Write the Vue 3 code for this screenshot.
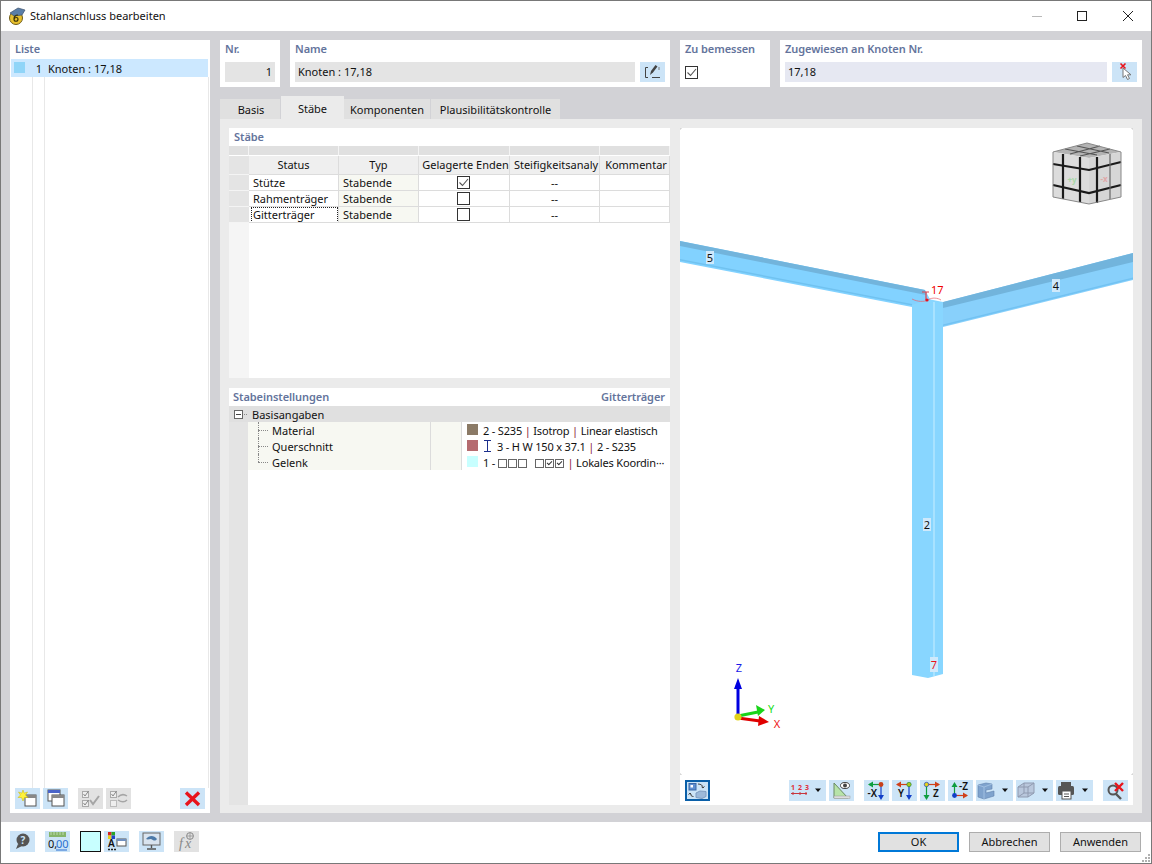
<script setup>
const tabs = [
  { label: 'Basis', width: 61 },
  { label: 'Stäbe', width: 63, active: true },
  { label: 'Komponenten', width: 87 },
  { label: 'Plausibilitätskontrolle', width: 130 }
]

const columns = ['Status', 'Typ', 'Gelagerte Enden', 'Steifigkeitsanaly', 'Kommentar']

const rows = [
  { status: 'Stütze', checked: true },
  { status: 'Rahmenträger', checked: false },
  { status: 'Gitterträger', checked: false, focus: true }
]
</script>

<template>
  <div class="window">
    <header class="titlebar">
      <svg class="app-icon" width="18" height="18" viewBox="0 0 18 18">
        <circle cx="8" cy="11" r="6.5" fill="#e8c02c" stroke="#6d5a18" />
        <path d="M2 6 L10 1 L17 3 L14 8 L6 9 Z" fill="#5b7fa8" stroke="#3c506c" stroke-width=".7" />
        <path d="M10 8 C7 8 6 10 6 12 C6 15 10 15 10 12 C10 10 7 10 6 12" fill="none" stroke="#3a3208" stroke-width="1.2" />
      </svg>
      <span class="title">Stahlanschluss bearbeiten</span>
      <div class="win-controls">
        <svg width="12" height="12" viewBox="0 0 12 12" class="win-min"><path d="M1 6.5 H11" stroke="#b9b9b9" /></svg>
        <svg width="12" height="12" viewBox="0 0 12 12" class="win-max"><rect x="1.5" y="1.5" width="9" height="9" fill="none" stroke="#222" /></svg>
        <svg width="12" height="12" viewBox="0 0 12 12" class="win-close"><path d="M1 1 L11 11 M11 1 L1 11" stroke="#222" /></svg>
      </div>
    </header>

    <div class="body">
      <aside class="list-panel">
        <div class="panel-label">Liste</div>
        <div class="list-area">
          <div class="list-row">
            <span class="list-swatch"></span>
            <span class="list-nr">1</span>
            <span class="list-text">Knoten : 17,18</span>
          </div>
          <div class="list-guides"><i></i><i></i><i></i></div>
        </div>
        <div class="list-tools">
          <button class="tb">
            <svg width="25" height="21" viewBox="0 0 25 21">
              <rect x="10" y="7" width="11" height="11" fill="#fff" stroke="#555" /><rect x="10" y="7" width="11" height="3" fill="#888" />
              <path d="M8 2 L9.2 5.2 L12.5 4 L10.5 7 L13 9.5 L9.5 9.5 L8 13 L6.5 9.5 L3 9.5 L5.5 7 L3.5 4 L6.8 5.2 Z" fill="#fff23a" stroke="#c9b400" stroke-width=".5" />
            </svg>
          </button>
          <button class="tb">
            <svg width="25" height="21" viewBox="0 0 25 21">
              <rect x="5" y="2" width="12" height="11" fill="#fff" stroke="#555" /><rect x="5" y="2" width="12" height="3" fill="#4a64c8" />
              <rect x="9" y="7" width="12" height="11" fill="#fff" stroke="#555" /><rect x="9" y="7" width="12" height="3" fill="#888" />
            </svg>
          </button>
          <button class="tb off gap-l">
            <svg width="25" height="21" viewBox="0 0 25 21">
              <rect x="4.5" y="3.5" width="6" height="6" fill="#eee" stroke="#aaa" /><rect x="4.5" y="12.5" width="6" height="6" fill="#eee" stroke="#aaa" />
              <path d="M5.5 6 L7 8 L10.5 3 M5.5 15 L7 17 L10.5 12" fill="none" stroke="#888" /><path d="M12 12 L15 16 L21 8" fill="none" stroke="#a5a5a5" stroke-width="2" />
            </svg>
          </button>
          <button class="tb off">
            <svg width="25" height="21" viewBox="0 0 25 21">
              <rect x="4.5" y="3.5" width="6" height="6" fill="#eee" stroke="#aaa" /><rect x="4.5" y="12.5" width="6" height="6" fill="#eee" stroke="#bbb" />
              <path d="M5.5 6 L7 8 L10.5 3" fill="none" stroke="#888" /><path d="M12 9 C15 6 18 6 21 8 M21 12 C18 15 15 14 12 12" fill="none" stroke="#a5a5a5" stroke-width="1.5" />
            </svg>
          </button>
          <button class="tb push-r">
            <svg width="25" height="21" viewBox="0 0 25 21"><path d="M6 4.5 L19 17 M19 4.5 L6 17" stroke="#e8141c" stroke-width="3.4" /></svg>
          </button>
        </div>
      </aside>

      <main class="main">
        <div class="top-row">
          <section class="box box-nr">
            <div class="panel-label">Nr.</div>
            <div class="field nr-field">1</div>
          </section>
          <section class="box box-name">
            <div class="panel-label">Name</div>
            <div class="field-row">
              <div class="field grow">Knoten : 17,18</div>
              <button class="tb">
                <svg width="25" height="20" viewBox="0 0 25 20">
                  <path d="M8 5.5 H5.5 V15.5 H8 M12 15.5 H20" fill="none" stroke="#444" />
                  <path d="M10 13 L11 9 L15.5 3 L17.5 4.5 L13 10.5 Z" fill="#444" /><path d="M19 5 V8" stroke="#777" />
                </svg>
              </button>
            </div>
          </section>
          <section class="box box-check">
            <div class="panel-label">Zu bemessen</div>
            <span class="check on top-check">
              <svg width="11" height="11" viewBox="0 0 11 11"><path d="M1.5 5.5 L4.5 8.5 L10 2" fill="none" stroke="#555" stroke-width="1.1" /></svg>
            </span>
          </section>
          <section class="box box-nodes">
            <div class="panel-label">Zugewiesen an Knoten Nr.</div>
            <div class="field-row">
              <div class="field grow nodes-field">17,18</div>
              <button class="tb">
                <svg width="25" height="20" viewBox="0 0 25 20">
                  <path d="M11 6 L11 15.5 L13.5 13.5 L15.5 17.5 L17.5 16.5 L15.5 12.8 L19 12.8 Z" fill="#fff" stroke="#777" />
                  <path d="M8.5 1.5 L13.5 6.5 M13.5 1.5 L8.5 6.5" stroke="#e8141c" stroke-width="1.6" />
                </svg>
              </button>
            </div>
          </section>
        </div>

        <nav class="tabs">
          <div
            v-for="tab in tabs"
            :key="tab.label"
            class="tab"
            :class="{ active: tab.active }"
            :style="{ width: tab.width + 'px' }"
          >{{ tab.label }}</div>
        </nav>

        <div class="tab-content">
          <div class="left-col">
            <section class="sheet sheet-members">
              <div class="panel-label sheet-label">Stäbe</div>
              <div class="grid">
                <div class="g-h0 g-corner"></div>
                <div v-for="col in columns" :key="'top-' + col" class="g-h0"></div>
                <div class="g-rowhead g-headrow"></div>
                <div v-for="col in columns" :key="col" class="g-head">{{ col }}</div>
                <template v-for="row in rows" :key="row.status">
                  <div class="g-rowhead"></div>
                  <div class="g-cell g-left"><span :class="{ focus: row.focus }">{{ row.status }}</span></div>
                  <div class="g-cell g-left g-tint">Stabende</div>
                  <div class="g-cell g-center">
                    <span class="check cell-check" :class="{ on: row.checked }">
                      <svg v-if="row.checked" width="11" height="11" viewBox="0 0 11 11"><path d="M1.5 5.5 L4.5 8.5 L10 2" fill="none" stroke="#555" stroke-width="1.1" /></svg>
                    </span>
                  </div>
                  <div class="g-cell g-center">--</div>
                  <div class="g-cell"></div>
                </template>
              </div>
              <div class="grid-rest"></div>
            </section>

            <section class="sheet sheet-settings">
              <div class="settings-head">
                <span class="panel-label flat">Stabeinstellungen</span>
                <span class="panel-label flat">Gitterträger</span>
              </div>
              <div class="tree-group">
                <span class="minus"></span>
                <span class="dots-h short"></span>
                <span>Basisangaben</span>
              </div>
              <div class="tree-wrap">
                <div class="tree-gutter"></div>
                <div class="tree-rows">
                  <div class="tree-row">
                    <div class="t-name"><span class="dots-v"></span><span class="dots-h"></span>Material</div>
                    <div class="t-mid"></div>
                    <div class="t-val"><span class="swatch" style="background: #8b7a66"></span><span>2 - S235 <b>|</b> Isotrop <b>|</b> Linear elastisch</span></div>
                  </div>
                  <div class="tree-row">
                    <div class="t-name"><span class="dots-v"></span><span class="dots-h"></span>Querschnitt</div>
                    <div class="t-mid"></div>
                    <div class="t-val">
                      <span class="swatch" style="background: #b56b70"></span>
                      <svg class="ibeam" width="9" height="12" viewBox="0 0 9 12"><path d="M1 .5 H8 M4.5 .5 V11.5 M1 11.5 H8" stroke="#1c2f8c" fill="none" /></svg>
                      <span>3 - H W 150 x 37.1 <b>|</b> 2 - S235</span>
                    </div>
                  </div>
                  <div class="tree-row">
                    <div class="t-name"><span class="dots-v end"></span><span class="dots-h"></span>Gelenk</div>
                    <div class="t-mid"></div>
                    <div class="t-val">
                      <span class="swatch" style="background: #c8ffff"></span>
                      <span>1 - <span class="dof-group"><i class="dof"></i><i class="dof"></i><i class="dof"></i></span><span class="dof-group second"><i class="dof"></i><i class="dof tick"></i><i class="dof tick"></i></span> <b>|</b> Lokales Koordin···</span>
                    </div>
                  </div>
                </div>
              </div>
            </section>
          </div>

          <section class="viewer">
            <svg class="scene" width="453" height="647" viewBox="680 128 453 647">
              <!-- corner marks -->
              <path d="M680 130 V128 H682 M1131 128 H1133 V130 M680 773 V775 H682 M1131 775 H1133 V773" fill="none" stroke="#c8c8c8" />
              <!-- beam 5 -->
              <polygon points="680,241 925,290 932,303 912,307 680,262" fill="#82d2ff" />
              <polygon points="680,241 925,290 926,295 680,246" fill="#72b4dc" />
              <polygon points="680,259 912,304 912,305.5 680,260.5" fill="#70c2f0" />
              <!-- beam 4 -->
              <polygon points="1133,253 1133,280 943,327 936,304" fill="#88d0fb" />
              <polygon points="1133,253 1133,262 943,308 943,302" fill="#72b4dc" />
              <polygon points="1133,277.5 1133,279 943,326 943,324.5" fill="#72c2f2" />
              <!-- column 2 -->
              <polygon points="912,305 928,299 943,302 943,674 928,678 912,675" fill="#88d6ff" />
              <polygon points="933,302 935,302 935,676 933,676" fill="#a8e2ff" />
              <!-- node 17 -->
              <path d="M922 292 H929 M926 292 V300" stroke="#e0404a" stroke-width="1.2" fill="none" />
              <path d="M912 299 C918 302 924 302 928 300 C932 297 938 298 941 300" stroke="#e8606a" stroke-width=".7" fill="none" />
              <circle cx="927" cy="300" r="1.6" fill="#e8101c" />
              <text x="931" y="294" class="s-label" fill="#f00000">17</text>
              <!-- member numbers -->
              <rect x="706" y="251" width="8" height="13" fill="#cfe9fb" />
              <text x="710" y="262" class="s-label mid" fill="#111">5</text>
              <rect x="1052" y="279" width="8" height="13" fill="#cfe9fb" />
              <text x="1056" y="290" class="s-label mid" fill="#111">4</text>
              <rect x="923" y="518" width="8" height="13" fill="#cfe9fb" />
              <text x="927" y="529" class="s-label mid" fill="#111">2</text>
              <rect x="930" y="657" width="8" height="15" fill="#cfe9fb" />
              <text x="934" y="669" class="s-label mid" fill="#e8141c">7</text>

              <!-- view cube -->
              <polygon points="1087,143 1121,152 1089,158 1053,152" fill="#b4b4b4" />
              <polygon points="1053,152 1089,158 1089,204 1053,197" fill="#dcdcdc" />
              <polygon points="1089,158 1121,152 1121,197 1089,204" fill="#d6d6d6" />
              <g stroke="#1a1a1a" stroke-width="2.2" fill="none">
                <path d="M1053 164 L1089 170 L1121 162 M1053 185 L1089 193 L1121 185" />
                <path d="M1063 154 V199 M1080 157 V202 M1097 157 V203" />
              </g>
              <path d="M1065 149 L1097 155 M1077 146 L1109 153 M1100 146 L1070 154 M1110 149 L1080 156" stroke="#555" stroke-width="1.1" fill="none" />
              <path d="M1110 154 V199" stroke="#666" stroke-width="1.2" />
              <polygon points="1053,152 1087,143 1121,152 1121,197 1089,204 1053,197" fill="none" stroke="#888" />
              <text x="1072" y="183" class="cube-y">+y</text>
              <text x="1104" y="182" class="cube-x">-x</text>

              <!-- axes -->
              <path d="M738 717 V686" stroke="#0000e0" stroke-width="3" />
              <polygon points="738,678 742,689 734,689" fill="#0000e0" />
              <path d="M738 716 L758 712" stroke="#19d419" stroke-width="3" />
              <polygon points="765,710 756,705 758,716" fill="#19d419" />
              <path d="M738 718 L760 721" stroke="#e00000" stroke-width="3" />
              <polygon points="769,722 759,716 758,726" fill="#e00000" />
              <circle cx="738" cy="717" r="3.6" fill="#e2d21a" />
              <text x="739" y="672" class="axis mid" fill="#1a1ae8">Z</text>
              <text x="771" y="713" class="axis mid" fill="#22dd22">Y</text>
              <text x="777" y="728" class="axis mid" fill="#ee1111">X</text>
            </svg>

            <div class="view-tools">
              <button class="tb outlined">
                <svg width="25" height="21" viewBox="0 0 25 21">
                  <rect x="4" y="3.5" width="7" height="6.5" fill="#5f8fd0" stroke="#3a68a8" /><rect x="5.5" y="5" width="2.5" height="2.5" fill="#fff" />
                  <path d="M13 4 C16 4 18 5.5 18 8 M18 8 L16.5 6.8 M18 8 L19.5 6.5 M5 13 C5 15 6.5 16.5 8.5 16.5 M5 13 L3.5 14.5 M5 13 L6.5 14.5" fill="none" stroke="#444" />
                  <path d="M11 13 L15 11 L21 11.5 V16.5 L17 18.5 L11 17.5 Z" fill="#9cb9d9" stroke="#7f9cc0" />
                </svg>
              </button>
              <button class="tb wide first">
                <svg width="37" height="21" viewBox="0 0 37 21">
                  <text x="2" y="10" class="tiny">1</text><text x="9" y="10" class="tiny">2</text><text x="16" y="10" class="tiny">3</text>
                  <path d="M2 13.5 H18 M4 12 V15 M11 12 V15 M17 12 V15" stroke="#c8353c" fill="none" />
                  <polygon points="26,8.5 32,8.5 29,12" fill="#111" />
                </svg>
              </button>
              <button class="tb">
                <svg width="25" height="21" viewBox="0 0 25 21">
                  <polygon points="5,3 5,18 19,18" fill="#b7e3a8" stroke="#6a8a62" />
                  <rect x="5" y="16" width="16" height="2.5" fill="#ddd" stroke="#999" stroke-width=".5" />
                  <ellipse cx="16" cy="5.5" rx="4.5" ry="3" fill="#fff" stroke="#444" /><circle cx="16" cy="5.5" r="2" fill="#444" />
                </svg>
              </button>
              <button class="tb gap-l">
                <svg width="25" height="21" viewBox="0 0 25 21">
                  <path d="M16 4.5 H5" stroke="#0f9d3f" stroke-width="1.2" /><polygon points="4,4.5 9,1.5 9,7.5" fill="#0f9d3f" />
                  <path d="M17 4.5 V17" stroke="#1440c8" stroke-width="1.2" /><polygon points="17,20 14,15 20,15" fill="#1440c8" />
                  <circle cx="17" cy="4.5" r="2.4" fill="#c8401a" />
                  <text x="3.5" y="17" class="ax-t">-X</text>
                </svg>
              </button>
              <button class="tb">
                <svg width="25" height="21" viewBox="0 0 25 21">
                  <path d="M16 4.5 H5" stroke="#d0401a" stroke-width="1.2" /><polygon points="4,4.5 9,1.5 9,7.5" fill="#d0401a" />
                  <path d="M17 4.5 V17" stroke="#1440c8" stroke-width="1.2" /><polygon points="17,20 14,15 20,15" fill="#1440c8" />
                  <circle cx="17" cy="4.5" r="2.2" fill="#a8c81a" stroke="#0f7d3f" stroke-width=".6" />
                  <text x="6" y="17" class="ax-t">Y</text>
                </svg>
              </button>
              <button class="tb">
                <svg width="25" height="21" viewBox="0 0 25 21">
                  <path d="M7 4.5 H19" stroke="#d0401a" stroke-width="1.2" /><polygon points="20,4.5 15,1.5 15,7.5" fill="#d0401a" />
                  <path d="M6.5 4.5 V17" stroke="#0f9d3f" stroke-width="1.2" /><polygon points="6.5,20 3.5,15 9.5,15" fill="#0f9d3f" />
                  <circle cx="6.5" cy="4.5" r="2.2" fill="#e8d21a" stroke="#1440c8" stroke-width=".7" />
                  <text x="13" y="17" class="ax-t">Z</text>
                </svg>
              </button>
              <button class="tb">
                <svg width="25" height="21" viewBox="0 0 25 21">
                  <path d="M6.5 15.5 V5" stroke="#0f9d3f" stroke-width="1.2" /><polygon points="6.5,2 3.5,7 9.5,7" fill="#0f9d3f" />
                  <path d="M7 15.5 H19" stroke="#d0401a" stroke-width="1.2" /><polygon points="20,15.5 15,12.5 15,18.5" fill="#d0401a" />
                  <circle cx="6.5" cy="15.5" r="2.4" fill="#1440c8" />
                  <text x="11" y="10" class="ax-t">-Z</text>
                </svg>
              </button>
              <button class="tb wide">
                <svg width="37" height="21" viewBox="0 0 37 21">
                  <polygon points="2,5 10,3 16,4 16,9 10,10 10,13 18,11 18,16 8,19 2,17" fill="#7fa3cd" stroke="#5f82ad" stroke-width=".6" />
                  <path d="M2 5 L8 7 L16 4 M8 7 V19" fill="none" stroke="#a9c6e6" stroke-width=".8" />
                  <polygon points="26,8.5 32,8.5 29,12" fill="#111" />
                </svg>
              </button>
              <button class="tb wide">
                <svg width="37" height="21" viewBox="0 0 37 21">
                  <path d="M2 7 L8 3 H18 V13 L12 17 H2 Z" fill="#b9c7dc" stroke="#8f9ab0" />
                  <path d="M2 7 H12 V17 M12 7 L18 3 M2 17 L8 13 H18 M8 3 V13" fill="none" stroke="#8f9ab0" />
                  <polygon points="26,8.5 32,8.5 29,12" fill="#111" />
                </svg>
              </button>
              <button class="tb wide">
                <svg width="37" height="21" viewBox="0 0 37 21">
                  <rect x="5" y="2" width="10" height="4" fill="#555" /><rect x="2" y="6" width="16" height="9" rx="1.5" fill="#555" />
                  <rect x="6" y="11" width="9" height="8" fill="#fff" stroke="#555" /><path d="M8 14 H13 M8 16.5 H13" stroke="#555" />
                  <polygon points="26,8.5 32,8.5 29,12" fill="#111" />
                </svg>
              </button>
              <button class="tb gap-m">
                <svg width="25" height="21" viewBox="0 0 25 21">
                  <circle cx="10" cy="10" r="4.5" fill="none" stroke="#555" stroke-width="2" /><path d="M13 14 L18 19" stroke="#555" stroke-width="2.4" />
                  <path d="M12 3 L20 11 M20 3 L12 11" stroke="#e8141c" stroke-width="2.4" />
                </svg>
              </button>
            </div>
          </section>
        </div>
      </main>
    </div>

    <footer class="footer">
      <div class="foot-tools">
        <button class="tb">
          <svg width="25" height="21" viewBox="0 0 25 21">
            <circle cx="13" cy="9" r="6.5" fill="#555" /><path d="M8 13 L6 18 L12 15 Z" fill="#555" />
            <text x="13" y="12.5" class="q">?</text>
          </svg>
        </button>
        <button class="tb f-gap">
          <svg width="25" height="21" viewBox="0 0 25 21">
            <rect x="4" y="1" width="17" height="5" fill="#86b56a" /><path d="M6 1 V4 M9 1 V4 M12 1 V4 M15 1 V4 M18 1 V4" stroke="#d6ead0" stroke-width=".7" />
            <text x="3" y="17" class="num">0,</text><text x="11" y="17" class="num blue">00</text>
            <path d="M11 19 H22" stroke="#2a6fd0" />
          </svg>
        </button>
        <span class="color-box"></span>
        <button class="tb tight">
          <svg width="25" height="21" viewBox="0 0 25 21">
            <rect x="4" y="1" width="3.5" height="3.5" fill="#d62222" /><rect x="7.5" y="1" width="3.5" height="3.5" fill="#28a428" />
            <rect x="4" y="4.5" width="3.5" height="3.5" fill="#e8d21a" /><rect x="7.5" y="4.5" width="3.5" height="3.5" fill="#2244c8" />
            <text x="4" y="16" class="ax-t">A</text><path d="M4 18.5 H12" stroke="#222" stroke-dasharray="2 1" stroke-width="1.5" />
            <rect x="13" y="8" width="9" height="7" fill="#fff" stroke="#555" /><rect x="13" y="8" width="9" height="2" fill="#7090c0" />
          </svg>
        </button>
        <button class="tb f-gap">
          <svg width="25" height="21" viewBox="0 0 25 21">
            <rect x="4" y="2" width="17" height="12" fill="#d9e4ef" stroke="#666" />
            <path d="M7 8 C10 4 15 4 18 8 C16 11 14 9 12 8 C10 8 9 9 7 8 Z" fill="#4d7aa8" />
            <path d="M12.5 14 V17 M8 18 H17" stroke="#555" stroke-width="1.4" />
          </svg>
        </button>
        <button class="tb off f-gap">
          <svg width="25" height="21" viewBox="0 0 25 21">
            <text x="5" y="17" class="fx">f</text><text x="11" y="17" class="fx">x</text>
            <circle cx="16" cy="5" r="3.4" fill="none" stroke="#888" /><path d="M16 2 V8 M13 5 H19" stroke="#888" stroke-width=".7" />
          </svg>
        </button>
      </div>
      <div class="foot-actions">
        <button class="action primary">OK</button>
        <button class="action">Abbrechen</button>
        <button class="action">Anwenden</button>
      </div>
      <svg class="grip" width="9" height="9" viewBox="0 0 9 9">
        <path d="M7 1h2v2H7z M4 4h2v2H4z M7 4h2v2H7z M1 7h2v2H1z M4 7h2v2H4z M7 7h2v2H7z" fill="#b0b0b0" />
      </svg>
    </footer>
  </div>
</template>

<style scoped>
.window {
  width: 1152px;
  height: 864px;
  box-sizing: border-box;
  border: 1px solid #787878;
  display: flex;
  flex-direction: column;
  background: #fff;
  color: #111;
  font-family: "Noto Sans", "Liberation Sans", sans-serif;
  font-size: 11px;
  overflow: hidden;
}

.titlebar {
  height: 30px;
  flex: none;
  display: flex;
  align-items: center;
  position: relative;
}

.app-icon {
  margin-left: 7px;
  margin-right: 4px;
}

.title {
  font-size: 11px;
  margin-top: -1px;
}

.win-controls {
  position: absolute;
  right: 17px;
  top: 9px;
  display: flex;
}

.win-min { margin-right: 33px; }
.win-max { margin-right: 34px; }

.body {
  height: 791px;
  flex: none;
  box-sizing: border-box;
  padding: 9px;
  display: flex;
  gap: 10px;
  background: #d2d2d6;
}

.panel-label {
  font-weight: 600;
  color: #64749c;
  font-size: 11px;
  line-height: 18px;
  padding-left: 5px;
  letter-spacing: -0.07px;
}

.panel-label.flat {
  padding: 0;
}

/* left list */
.list-panel {
  width: 200px;
  flex: none;
  background: #fff;
  display: flex;
  flex-direction: column;
  box-sizing: border-box;
}

.list-panel > .panel-label {
  height: 19px;
}

.list-area {
  flex: 1;
  position: relative;
  margin: 0 1px;
  display: flex;
  flex-direction: column;
}

.list-row {
  height: 18px;
  display: flex;
  align-items: center;
  background: #cce8ff;
  width: 197px;
}

.list-swatch {
  width: 11px;
  height: 11px;
  margin: 0 0 2px 3px;
  background: #90d5f8;
}

.list-nr {
  width: 14px;
  margin-left: 3px;
  text-align: right;
  margin-right: 6px;
}

.list-guides {
  flex: 1;
  display: flex;
  width: 198px;
  position: relative;
}

.list-guides i {
  width: 1px;
  background: #e8e8e8;
}

.list-guides i:nth-child(1) { margin-left: 21px; }
.list-guides i:nth-child(2) { margin-left: 11px; }
.list-guides i:nth-child(3) { margin-left: auto; }

.list-tools {
  height: 25px;
  flex: none;
  display: flex;
  gap: 3px;
  padding-left: 5px;
}

.tb {
  width: 25px;
  height: 21px;
  flex: none;
  padding: 0;
  border: 0;
  background: #cce4f7;
  display: block;
}

.tb svg {
  display: block;
}

.tb.off {
  background: #e2e2e2;
}

.gap-l { margin-left: 7px; }
.push-r { margin-left: 46px; }

/* header boxes */
.main {
  flex: 1;
  min-width: 0;
  display: flex;
  flex-direction: column;
}

.top-row {
  height: 47px;
  flex: none;
  display: flex;
  gap: 10px;
}

.box {
  background: #fff;
  box-sizing: border-box;
  padding: 0 5px;
}

.box .panel-label {
  padding-left: 0;
  height: 22px;
}

.box-nr { width: 60px; }
.box-name { width: 380px; }
.box-check { width: 90px; }
.box-nodes { width: 362px; }

.field {
  height: 20px;
  line-height: 20px;
  background: #e4e4e4;
  padding: 0 3px;
  box-sizing: border-box;
  font-size: 11px;
}

.nr-field {
  text-align: right;
}

.field-row {
  display: flex;
  gap: 5px;
}

.field-row .tb {
  height: 20px;
}

.grow { flex: 1; }

.nodes-field {
  background: #e6e8f2;
}

.check {
  display: inline-flex;
  align-items: center;
  justify-content: center;
  width: 13px;
  height: 13px;
  box-sizing: border-box;
  border: 1px solid #333;
  background: #fff;
  vertical-align: middle;
}

.top-check {
  display: flex;
  margin-top: 4px;
}

.cell-check {
  margin-right: 2px;
}

/* tabs */
.tabs {
  height: 22px;
  margin-top: 10px;
  flex: none;
  display: flex;
  align-items: flex-end;
}

.tab {
  height: 20px;
  line-height: 22px;
  text-align: center;
  background: #e0e0e0;
  box-sizing: border-box;
  border-right: 1px solid #d2d2d6;
}

.tab:first-child {
  padding-left: 2px;
}

.tab.active {
  height: 23px;
  line-height: 25px;
  background: #ebebeb;
  border-right: 0;
}

.tab-content {
  flex: 1;
  min-height: 0;
  background: #ebebeb;
  padding: 9px 9px 8px;
  display: flex;
  gap: 10px;
}

.left-col {
  width: 441px;
  flex: none;
  display: flex;
  flex-direction: column;
  gap: 10px;
}

.sheet {
  background: #fff;
  display: flex;
  flex-direction: column;
}

.sheet-members {
  height: 250px;
  flex: none;
}

.sheet-settings {
  flex: 1;
  min-height: 0;
}

.sheet-label {
  height: 18px;
  flex: none;
}

/* members table */
.grid {
  display: grid;
  grid-template-columns: 20px 90px 80px 91px 90px 70px;
  grid-template-rows: 10px 19px 16px 16px 16px;
  flex: none;
}

.g-h0 {
  background: #e0e0e0;
  border-right: 1px solid #f4f4f4;
  border-bottom: 1px solid #fff;
  box-sizing: border-box;
}

.g-rowhead {
  background: #e4e4e4;
  border-bottom: 1px solid #f4f4f4;
  box-sizing: border-box;
}

.g-head {
  background: #efefef;
  border-right: 1px solid #dcdcdc;
  border-bottom: 1px solid #dcdcdc;
  box-sizing: border-box;
  text-align: center;
  line-height: 17px;
  white-space: nowrap;
  overflow: hidden;
}

.grid > .g-head:nth-child(n+10) {
  padding-left: 3px;
}

.g-cell {
  border-right: 1px solid #dcdcdc;
  border-bottom: 1px solid #dcdcdc;
  box-sizing: border-box;
  line-height: 15px;
  white-space: nowrap;
  overflow: hidden;
  display: flex;
  align-items: center;
}

.g-left { padding-left: 4px; }
.g-center { justify-content: center; }
.g-tint { background: #f7f8f2; }

.focus {
  outline: 1px dotted #222;
  outline-offset: 0;
  display: block;
  width: 85px;
  height: 14px;
  margin-left: -1px;
  padding-left: 1px;
  box-sizing: border-box;
  line-height: 14px;
}

.grid-rest {
  flex: 1;
  width: 20px;
  background: #f5f5f5;
}

/* settings tree */
.settings-head {
  height: 18px;
  flex: none;
  display: flex;
  justify-content: space-between;
  padding: 0 5px 0 4px;
}

.tree-group {
  height: 16px;
  flex: none;
  background: #e0e0e0;
  display: flex;
  align-items: center;
  padding-left: 5px;
}

.minus {
  width: 9px;
  height: 9px;
  box-sizing: border-box;
  border: 1px solid #666;
  background: linear-gradient(#444, #444) center / 5px 1px no-repeat #fff;
  flex: none;
}

.dots-h {
  width: 10px;
  height: 0;
  border-top: 1px dotted #888;
  flex: none;
  margin-right: 4px;
}

.dots-h.short {
  width: 3px;
  margin-left: 1px;
  margin-right: 5px;
}

.tree-wrap {
  flex: 1;
  min-height: 0;
  display: flex;
}

.tree-gutter {
  width: 19px;
  flex: none;
  background: #e4e4e4;
}

.tree-rows {
  flex: 1;
  min-width: 0;
}

.tree-row {
  height: 16px;
  display: grid;
  grid-template-columns: 182px 33px 1fr;
}

.t-name {
  background: #f7f8f2;
  padding-left: 10px;
  display: flex;
  align-items: center;
  position: relative;
}

.dots-v {
  position: absolute;
  left: 10px;
  top: 0;
  bottom: 0;
  border-left: 1px dotted #888;
}

.dots-v.end {
  bottom: 8px;
}

.t-mid {
  background: #f7f8f2;
  border-left: 1px solid #dcdcdc;
  border-right: 1px solid #dcdcdc;
  margin-right: 1px;
}

.t-val {
  display: flex;
  align-items: center;
  padding-left: 4px;
  white-space: pre;
  letter-spacing: -0.18px;
}

.t-val b {
  font-weight: 400;
  color: #8b1a3a;
}

.swatch {
  width: 11px;
  height: 11px;
  flex: none;
  margin-right: 5px;
  margin-bottom: 2px;
}

.ibeam {
  margin-right: 5px;
  flex: none;
}

.dof-group {
  display: inline-flex;
  vertical-align: -1px;
}

.dof-group.second {
  margin-left: 7px;
}

.dof {
  width: 9px;
  height: 9px;
  box-sizing: border-box;
  border: 1px solid #666;
  margin-right: 1px;
  position: relative;
}

.dof.tick::after {
  content: "";
  position: absolute;
  left: 1px;
  top: 1px;
  width: 4px;
  height: 2px;
  border-left: 1px solid #333;
  border-bottom: 1px solid #333;
  transform: rotate(-45deg);
}

/* viewer */
.viewer {
  width: 453px;
  flex: none;
  background: #fff;
  display: flex;
  flex-direction: column;
}

.scene {
  display: block;
  flex: none;
}

.s-label {
  font-size: 11px;
  font-family: "Noto Sans", sans-serif;
}

.mid {
  text-anchor: middle;
}

.cube-y {
  font-size: 8px;
  font-weight: 700;
  fill: #a8d8a8;
  text-anchor: middle;
  font-family: "Noto Sans", sans-serif;
}

.cube-x {
  font-size: 8px;
  font-weight: 700;
  fill: #e0a8a8;
  text-anchor: middle;
  font-family: "Noto Sans", sans-serif;
}

.axis {
  font-size: 11px;
  font-family: "Noto Sans", sans-serif;
}

.view-tools {
  height: 30px;
  flex: none;
  display: flex;
  padding: 5px 0 0 5px;
  box-sizing: border-box;
  gap: 3px;
}

.tb.outlined {
  outline: 2px solid #0a5fa8;
  outline-offset: -2px;
}

.tb.wide { width: 37px; }
.first { margin-left: 76px; }
.view-tools .gap-l { margin-left: 7px; }
.gap-m { margin-left: 7px; }

.tiny {
  font-size: 7px;
  font-weight: 700;
  fill: #e0303a;
  font-family: "Noto Sans", sans-serif;
}

.ax-t {
  font-size: 10px;
  font-weight: 600;
  fill: #111;
  font-family: "Noto Sans", sans-serif;
}

/* footer */
.footer {
  flex: 1;
  min-height: 0;
  display: flex;
  align-items: flex-start;
  justify-content: space-between;
  padding: 9px 10px 0 9px;
  position: relative;
}

.foot-tools {
  display: flex;
  align-items: center;
}

.f-gap { margin-left: 10px; }
.tight { margin-left: 3px; }

.color-box {
  width: 21px;
  height: 21px;
  box-sizing: border-box;
  border: 1px solid #111;
  background: #c8ffff;
  margin-left: 10px;
}

.q {
  font-size: 10px;
  font-weight: 700;
  fill: #cce4f7;
  text-anchor: middle;
  font-family: "Noto Sans", sans-serif;
}

.num {
  font-size: 11px;
  fill: #111;
  font-family: "Noto Sans", sans-serif;
}

.num.blue { fill: #2a6fd0; }

.fx {
  font-size: 14px;
  font-style: italic;
  fill: #888;
  font-family: "Liberation Serif", serif;
}

.foot-actions {
  display: flex;
  gap: 10px;
  margin-top: 1px;
}

.action {
  width: 81px;
  height: 20px;
  box-sizing: border-box;
  border: 1px solid #adadad;
  background: #e1e1e1;
  font: inherit;
  color: #111;
  padding: 0;
  line-height: 18px;
}

.action.primary {
  border: 2px solid #0078d7;
  line-height: 16px;
}

.grip {
  position: absolute;
  right: 1px;
  bottom: 1px;
}
</style>

<style>
html, body {
  margin: 0;
  background: #fff;
}
</style>
